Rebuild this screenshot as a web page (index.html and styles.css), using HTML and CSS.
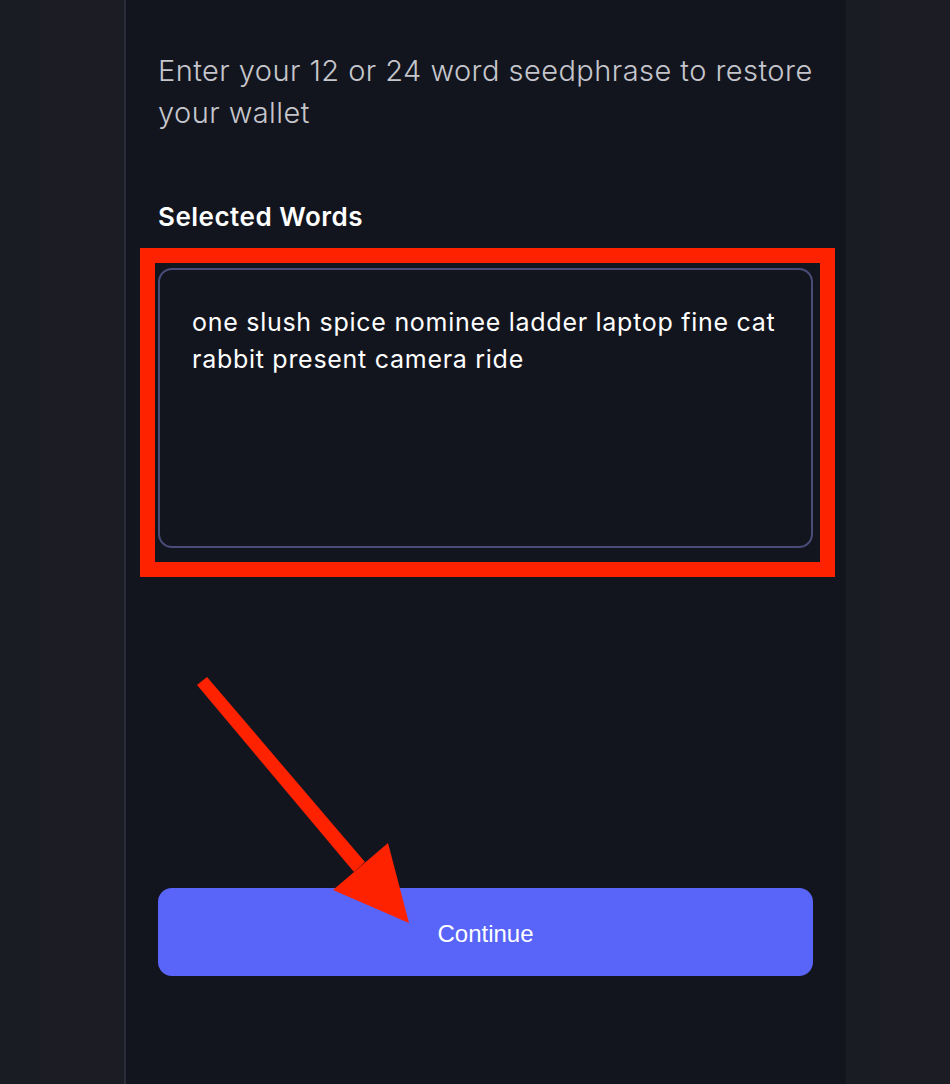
FILE: index.html
```html
<!DOCTYPE html>
<html>
<head>
<meta charset="utf-8">
<link rel="stylesheet" href="styles.css">
</head>
<body>
<div class="page">
  <div class="side side-left"></div>
  <main class="panel">
    <p class="intro">Enter your 12 or 24 word seedphrase to restore your wallet</p>
    <h2 class="label">Selected Words</h2>
    <div class="field-wrap">
      <div class="field">one slush spice nominee ladder laptop fine cat rabbit present camera ride</div>
      <div class="highlight"></div>
    </div>
    <div class="spacer"></div>
    <button class="btn">Continue</button>
    <svg class="arrow" width="260" height="280" viewBox="0 0 260 280">
      <polygon fill="#ff2200" points="17,25 27,17 185,202 174,212"/>
      <polygon fill="#ff2200" points="153,230 208,183 229,263"/>
    </svg>
  </main>
  <div class="side side-right"></div>
</div>
</body>
</html>
```
FILE: styles.css
```css
html, body {
  margin: 0;
  padding: 0;
  height: 100%;
  background: #1a1b23;
}
.page {
  display: flex;
  height: 1084px;
  overflow: hidden;
}
.side {
  background: linear-gradient(90deg, #1a1c24, #1c1c24);
}
.side-left {
  width: 124px;
  border-right: 2px solid #2a2c39;
}
.side-right {
  flex: 1;
}
.panel {
  position: relative;
  width: 655px;
  padding: 0 33px 0 32px;
  background: #13151e;
  display: flex;
  flex-direction: column;
}
.intro {
  margin: 50px 0 0;
  font-family: "Inter", "Liberation Sans", sans-serif;
  font-weight: 300;
  font-size: 29px;
  line-height: 42px;
  color: #c5c6cc;
  letter-spacing: 0.45px;
}
.label {
  margin: 68px 0 0;
  font-family: "Inter", "Liberation Sans", sans-serif;
  font-weight: 600;
  font-size: 26px;
  line-height: 30px;
  color: #ffffff;
  letter-spacing: 0.5px;
}
.field-wrap {
  position: relative;
  margin-top: 36px;
}
.field {
  box-sizing: border-box;
  height: 280px;
  border: 2px solid #4a4c78;
  border-radius: 14px;
  padding: 34px 32px;
  font-family: "Inter", "Liberation Sans", sans-serif;
  font-size: 25px;
  line-height: 37px;
  color: #ffffff;
  letter-spacing: 0.72px;
}
.highlight {
  position: absolute;
  left: -18px;
  top: -20px;
  right: -22px;
  bottom: -29px;
  border: 15px solid #ff2200;
}
.spacer {
  height: 340px;
}
.btn {
  height: 88px;
  border: none;
  border-radius: 14px;
  background: #5865f8;
  color: #ffffff;
  font-family: "Liberation Sans", "Inter", sans-serif;
  font-size: 24px;
  padding: 4px 0 0;
}
.arrow {
  position: absolute;
  left: 54px;
  top: 660px;
}
```
